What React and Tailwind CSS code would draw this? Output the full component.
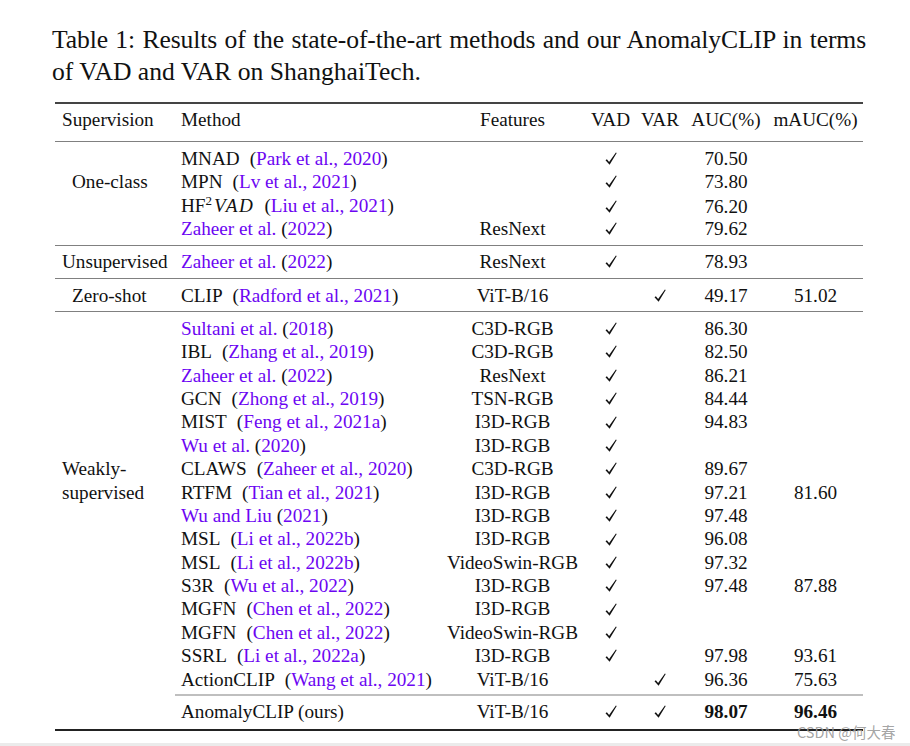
import React from "react";

const LINK = "text-[#6c05f2]";

// "MNAD  (Park et al., 2020)"
function Cite({ name, cite }) {
  return (
    <>
      {name}
      <span className="ml-[10px]">(</span>
      <span className={LINK}>{cite}</span>)
    </>
  );
}

// "Zaheer et al. (2022)"
function TextCite({ author, year }) {
  return (
    <>
      <span className={LINK}>{author}</span> (<span className={LINK}>{year}</span>)
    </>
  );
}

function Check() {
  return (
    <svg viewBox="0 0 12 13" className="w-[12px] h-[13px]">
      <path d="M0.5 8.3 L1.9 7.2 L4.1 10 L10.9 0.5 L11.7 1.1 L4.6 12.8 Z" fill="#111" />
    </svg>
  );
}

const HF2 = (
  <>
    HF<span className="relative -top-[7px] text-[13px]">2</span>
    <i className="ml-[2px] tracking-[1.5px]">VAD</i>
  </>
);

const GROUPS = [
  {
    rows: [
      { sup: "", method: <Cite name="MNAD" cite="Park et al., 2020" />, feat: "", vad: true, auc: "70.50" },
      { sup: "One-class", pad: "pl-[17px]", method: <Cite name="MPN" cite="Lv et al., 2021" />, feat: "", vad: true, auc: "73.80" },
      { method: <Cite name={HF2} cite="Liu et al., 2021" />, feat: "", vad: true, auc: "76.20" },
      { method: <TextCite author="Zaheer et al." year="2022" />, feat: "ResNext", vad: true, auc: "79.62" },
    ],
  },
  {
    rows: [
      { sup: "Unsupervised", pad: "pl-[7px]", method: <TextCite author="Zaheer et al." year="2022" />, feat: "ResNext", vad: true, auc: "78.93" },
    ],
  },
  {
    rows: [
      { sup: "Zero-shot", pad: "pl-[17px]", method: <Cite name="CLIP" cite="Radford et al., 2021" />, feat: "ViT-B/16", var: true, auc: "49.17", mauc: "51.02" },
    ],
  },
  {
    partial: true,
    rows: [
      { method: <TextCite author="Sultani et al." year="2018" />, feat: "C3D-RGB", vad: true, auc: "86.30" },
      { method: <Cite name="IBL" cite="Zhang et al., 2019" />, feat: "C3D-RGB", vad: true, auc: "82.50" },
      { method: <TextCite author="Zaheer et al." year="2022" />, feat: "ResNext", vad: true, auc: "86.21" },
      { method: <Cite name="GCN" cite="Zhong et al., 2019" />, feat: "TSN-RGB", vad: true, auc: "84.44" },
      { method: <Cite name="MIST" cite="Feng et al., 2021a" />, feat: "I3D-RGB", vad: true, auc: "94.83" },
      { method: <TextCite author="Wu et al." year="2020" />, feat: "I3D-RGB", vad: true },
      { sup: "Weakly-", pad: "pl-[7px]", method: <Cite name="CLAWS" cite="Zaheer et al., 2020" />, feat: "C3D-RGB", vad: true, auc: "89.67" },
      { sup: "supervised", pad: "pl-[7px]", method: <Cite name="RTFM" cite="Tian et al., 2021" />, feat: "I3D-RGB", vad: true, auc: "97.21", mauc: "81.60" },
      { method: <TextCite author="Wu and Liu" year="2021" />, feat: "I3D-RGB", vad: true, auc: "97.48" },
      { method: <Cite name="MSL" cite="Li et al., 2022b" />, feat: "I3D-RGB", vad: true, auc: "96.08" },
      { method: <Cite name="MSL" cite="Li et al., 2022b" />, feat: "VideoSwin-RGB", vad: true, auc: "97.32" },
      { method: <Cite name="S3R" cite="Wu et al., 2022" />, feat: "I3D-RGB", vad: true, auc: "97.48", mauc: "87.88" },
      { method: <Cite name="MGFN" cite="Chen et al., 2022" />, feat: "I3D-RGB", vad: true },
      { method: <Cite name="MGFN" cite="Chen et al., 2022" />, feat: "VideoSwin-RGB", vad: true },
      { method: <Cite name="SSRL" cite="Li et al., 2022a" />, feat: "I3D-RGB", vad: true, auc: "97.98", mauc: "93.61" },
      { method: <Cite name="ActionCLIP" cite="Wang et al., 2021" />, feat: "ViT-B/16", var: true, auc: "96.36", mauc: "75.63" },
    ],
  },
  {
    last: true,
    rows: [
      { method: "AnomalyCLIP (ours)", feat: "ViT-B/16", vad: true, var: true, auc: "98.07", mauc: "96.46", bold: true },
    ],
  },
];

const COLS = "grid grid-cols-[120px_265px_145px_51px_48px_84px_95px] h-[23.4px] items-center";

function Row({ r }) {
  return (
    <div className={COLS}>
      <div className={`whitespace-nowrap ${r.pad || ""}`}>{r.sup}</div>
      <div className="pl-[6px] whitespace-nowrap">{r.method}</div>
      <div className="text-center">{r.feat}</div>
      <div className="flex justify-center">{r.vad && <Check />}</div>
      <div className="flex justify-center">{r.var && <Check />}</div>
      <div className={`text-center ${r.bold ? "font-bold" : ""}`}>{r.auc}</div>
      <div className={`text-center ${r.bold ? "font-bold" : ""}`}>{r.mauc}</div>
    </div>
  );
}

export default function App() {
  return (
    <div className="h-[746px] flex flex-col bg-white text-[#111] relative" style={{ fontFamily: '"Liberation Serif", serif' }}>
      <div className="flex-1">
        {/* Caption */}
        <div className="pt-[24px] pl-[52px] w-[866px] text-[25.6px] leading-[32px]">
          <div className="text-justify [text-align-last:justify] whitespace-nowrap tracking-[-0.1px]">
            Table 1: Results of the state-of-the-art methods and our AnomalyCLIP in terms
          </div>
          <div>of VAD and VAR on ShanghaiTech.</div>
        </div>

        {/* Table */}
        <div className="ml-[55px] w-[808px] mt-[14px] text-[19.2px] leading-[23.4px]">
          <div className="h-[2px] bg-[#444]" />
          <div className="pt-[4px] pb-[10px] border-b-[1.3px] border-[#808080]">
            <div className={COLS}>
              <div className="pl-[7px]">Supervision</div>
              <div className="pl-[6px]">Method</div>
              <div className="text-center">Features</div>
              <div className="text-center">VAD</div>
              <div className="text-center">VAR</div>
              <div className="text-center">AUC(%)</div>
              <div className="text-center">mAUC(%)</div>
            </div>
          </div>

          {GROUPS.map((g, gi) => (
            <div key={gi} className={`pt-[4.4px] ${g.last ? "pb-[5.5px] border-b-2 border-[#222]" : g.partial ? "pb-[4.5px]" : "pb-[4.5px] border-b-[1.3px] border-[#808080]"}`}>
              {g.rows.map((r, ri) => (
                <Row key={ri} r={r} />
              ))}
              {g.partial && <div className="ml-[120px] h-[1.3px] bg-[#808080] translate-y-[4.5px] -mt-[1.3px]" />}
            </div>
          ))}
        </div>
      </div>

      {/* watermark */}
      <div className="absolute left-[797px] top-[721px] text-[14.5px] text-[#9a9a9a]/90" style={{ fontFamily: '"Noto Sans CJK SC", "Noto Sans", sans-serif' }}>
        CSDN @何大春
      </div>

      <div className="h-[3px] bg-[#ebebeb]" />
    </div>
  );
}
